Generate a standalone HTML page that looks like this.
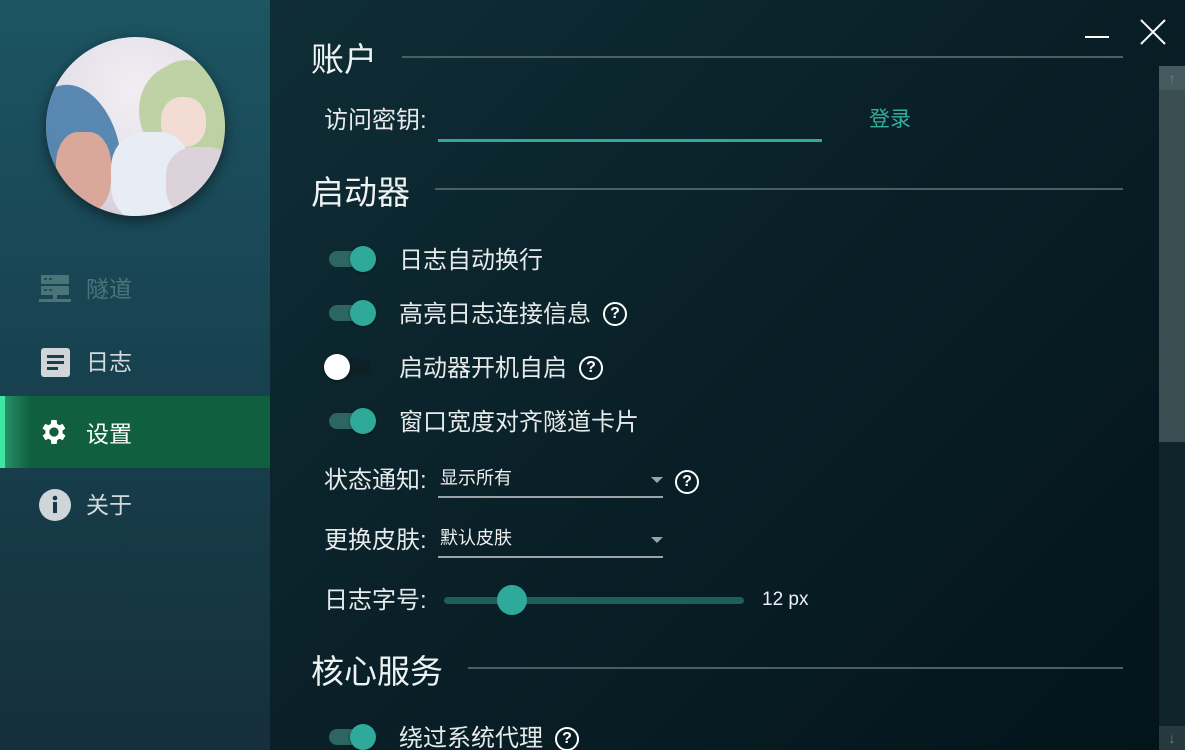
<!DOCTYPE html>
<html><head><meta charset="utf-8"><style>
*{margin:0;padding:0;box-sizing:border-box}
html,body{width:1185px;height:750px;overflow:hidden}
body{font-family:"Liberation Sans","Noto Sans CJK SC",sans-serif;background:linear-gradient(135deg,#11323b 0%,#0a2129 50%,#03141a 100%);position:relative;color:#e8ecec}
.side{position:absolute;left:0;top:0;width:270px;height:750px;background:linear-gradient(180deg,#1d5563 0%,#18414f 50%,#152f3b 100%)}
.av{position:absolute;left:46px;top:37px;width:179px;height:179px;border-radius:50%;overflow:hidden;box-shadow:0 4px 14px rgba(0,0,0,.5);background:radial-gradient(circle at 50% 30%,#f1eef3 0%,#e6e2ea 45%,#cfc6cf 100%)}
.nav{position:absolute;left:0;width:270px;height:72px;display:flex;align-items:center;font-size:23px}
.nav .ic{position:absolute;left:39px;top:22px;width:32px;height:32px}
.nav span{position:absolute;left:86px}
.t{position:absolute;white-space:nowrap;line-height:1.2}
.h{font-size:33px;color:#eef2f2}
.line{position:absolute;height:2px;background:#4a5f63}
.lab{font-size:24px;color:#e6eaea}
.tg{position:absolute;width:44px;height:16px;border-radius:8px;background:#2d6661}
.tg::after{content:"";position:absolute;right:-3px;top:-5px;width:26px;height:26px;border-radius:50%;background:#2ea99a;box-shadow:0 1px 3px rgba(0,0,0,.4)}
.q{position:absolute;width:24px;height:24px;border:2px solid #fff;border-radius:50%;font-size:16px;font-weight:bold;color:#fff;text-align:center;line-height:20px}
.dd{position:absolute;width:225px;height:2px;background:#9aa3a5}
.arr{position:absolute;width:0;height:0;border-left:6px solid transparent;border-right:6px solid transparent;border-top:6px solid #9aa3a5}
</style></head><body>
<div class="side">
 <div class="av">
  <div style="position:absolute;left:0;top:45px;width:70px;height:110px;background:#3f78a8;border-radius:30% 60% 40% 30%;transform:rotate(-15deg);opacity:.85"></div>
  <div style="position:absolute;left:10px;top:95px;width:55px;height:80px;background:#d9a89a;border-radius:40%;"></div>
  <div style="position:absolute;left:95px;top:25px;width:95px;height:110px;background:#b8cf9c;border-radius:50% 40% 30% 50%;transform:rotate(-30deg);opacity:.9"></div>
  <div style="position:absolute;left:115px;top:60px;width:45px;height:50px;background:#f2dcd3;border-radius:45%"></div>
  <div style="position:absolute;left:65px;top:95px;width:80px;height:90px;background:#e8ecf4;border-radius:40%"></div>
  <div style="position:absolute;left:120px;top:110px;width:70px;height:70px;background:#dcd3da;border-radius:40%"></div>
 </div>
 <div class="nav" style="top:251px;color:#4b7478"><svg class="ic" viewBox="0 0 32 32"><rect x="2" y="2" width="28" height="9" rx="1" fill="#4b7478"/><rect x="2" y="13" width="28" height="9" rx="1" fill="#4b7478"/><rect x="5" y="5" width="3" height="2" fill="#1c4e5b"/><rect x="10" y="5" width="3" height="2" fill="#1c4e5b"/><rect x="5" y="16" width="3" height="2" fill="#1c4e5b"/><rect x="10" y="16" width="3" height="2" fill="#1c4e5b"/><rect x="14" y="22" width="4" height="5" fill="#4b7478"/><rect x="0" y="26" width="32" height="3" fill="#4b7478"/></svg><span>隧道</span></div>
 <div class="nav" style="top:324px;color:#d4dadb"><svg class="ic" viewBox="0 0 32 32"><rect x="2" y="2" width="29" height="29" rx="3" fill="#cfd5d8"/><rect x="8" y="9" width="17" height="3" fill="#19404c"/><rect x="8" y="15" width="17" height="3" fill="#19404c"/><rect x="8" y="21" width="11" height="3" fill="#19404c"/></svg><span>日志</span></div>
 <div class="nav" style="top:396px;background:linear-gradient(90deg,#2a9a72 0,#10603f 30px,#10603f 100%);color:#fff"><div style="position:absolute;left:0;top:0;width:5px;height:72px;background:#3fe8a0"></div><svg class="ic" viewBox="0 0 24 24" style="left:38px;top:20px"><path fill="#fff" d="M19.4 13a7.5 7.5 0 000-2l2.1-1.6-2-3.5-2.5 1a7.6 7.6 0 00-1.7-1L15 3h-4l-.4 2.9a7.6 7.6 0 00-1.7 1l-2.5-1-2 3.5L6.6 11a7.5 7.5 0 000 2l-2.1 1.6 2 3.5 2.5-1c.5.4 1.1.8 1.7 1L11 21h4l.4-2.9c.6-.2 1.2-.6 1.7-1l2.5 1 2-3.5zM13 15.5A3.5 3.5 0 1113 8.5a3.5 3.5 0 010 7z" transform="translate(-1 0)"/></svg><span>设置</span></div>
 <div class="nav" style="top:467px;color:#d4dadb"><svg class="ic" viewBox="0 0 32 32"><circle cx="16" cy="16" r="16" fill="#cfd5d8"/><circle cx="16" cy="9" r="2.3" fill="#17384a"/><rect x="14" y="13" width="4" height="11" fill="#17384a"/></svg><span>关于</span></div>
</div>

<div style="position:absolute;left:1085px;top:36px;width:24px;height:2px;background:#fff"></div>
<svg style="position:absolute;left:1139px;top:18px" width="28" height="28" viewBox="0 0 28 28"><path d="M2 2L26 26M26 2L2 26" stroke="#fff" stroke-width="2"/></svg>
<div style="position:absolute;left:1159px;top:66px;width:26px;height:684px;background:#0f252b"></div>
<div style="position:absolute;left:1159px;top:66px;width:26px;height:376px;background:#3b4f53"></div>
<div style="position:absolute;left:1159px;top:66px;width:26px;height:24px;background:#445a5e;color:#6f8285;font-size:14px;text-align:center;line-height:24px">↑</div>
<div style="position:absolute;left:1159px;top:726px;width:26px;height:24px;background:#26393d;color:#6f8285;font-size:14px;text-align:center;line-height:24px">↓</div>

<div class="t h" style="left:311px;top:40px">账户</div>
<div class="line" style="left:402px;top:56px;width:721px"></div>
<div class="t lab" style="left:324px;top:107px">访问密钥:</div>
<div style="position:absolute;left:438px;top:139px;width:384px;height:3px;background:#2ea99a"></div>
<div class="t" style="left:869px;top:107px;font-size:21px;color:#35ad9b">登录</div>

<div class="t h" style="left:311px;top:173px">启动器</div>
<div class="line" style="left:435px;top:188px;width:688px"></div>

<div class="tg" style="left:329px;top:251px"></div><div class="t lab" style="left:399px;top:247px">日志自动换行</div>
<div class="tg" style="left:329px;top:305px"></div><div class="t lab" style="left:399px;top:301px">高亮日志连接信息</div><div class="q" style="left:603px;top:302px">?</div>
<div style="position:absolute;left:329px;top:359px;width:42px;height:16px;border-radius:8px;background:#0d2026"></div><div style="position:absolute;left:324px;top:354px;width:26px;height:26px;border-radius:50%;background:#fff;box-shadow:0 1px 3px rgba(0,0,0,.5)"></div>
<div class="t lab" style="left:399px;top:355px">启动器开机自启</div><div class="q" style="left:579px;top:356px">?</div>
<div class="tg" style="left:329px;top:413px"></div><div class="t lab" style="left:399px;top:409px">窗口宽度对齐隧道卡片</div>

<div class="t lab" style="left:324px;top:467px">状态通知:</div>
<div class="t" style="left:440px;top:468px;font-size:18px;color:#f0f0f0">显示所有</div>
<div class="arr" style="left:651px;top:477px"></div>
<div class="dd" style="left:438px;top:496px"></div>
<div class="q" style="left:675px;top:470px">?</div>

<div class="t lab" style="left:324px;top:527px">更换皮肤:</div>
<div class="t" style="left:440px;top:528px;font-size:18px;color:#f0f0f0">默认皮肤</div>
<div class="arr" style="left:651px;top:537px"></div>
<div class="dd" style="left:438px;top:556px"></div>

<div class="t lab" style="left:324px;top:587px">日志字号:</div>
<div style="position:absolute;left:444px;top:597px;width:300px;height:7px;border-radius:4px;background:#1d5f5a"></div>
<div style="position:absolute;left:497px;top:585px;width:30px;height:30px;border-radius:50%;background:#2ea99a"></div>
<div class="t" style="left:762px;top:589px;font-size:19px;color:#eef">12 px</div>

<div class="t h" style="left:311px;top:652px">核心服务</div>
<div class="line" style="left:468px;top:667px;width:655px"></div>
<div class="tg" style="left:329px;top:729px"></div><div class="t lab" style="left:399px;top:725px">绕过系统代理</div><div class="q" style="left:555px;top:727px">?</div>
</body></html>
